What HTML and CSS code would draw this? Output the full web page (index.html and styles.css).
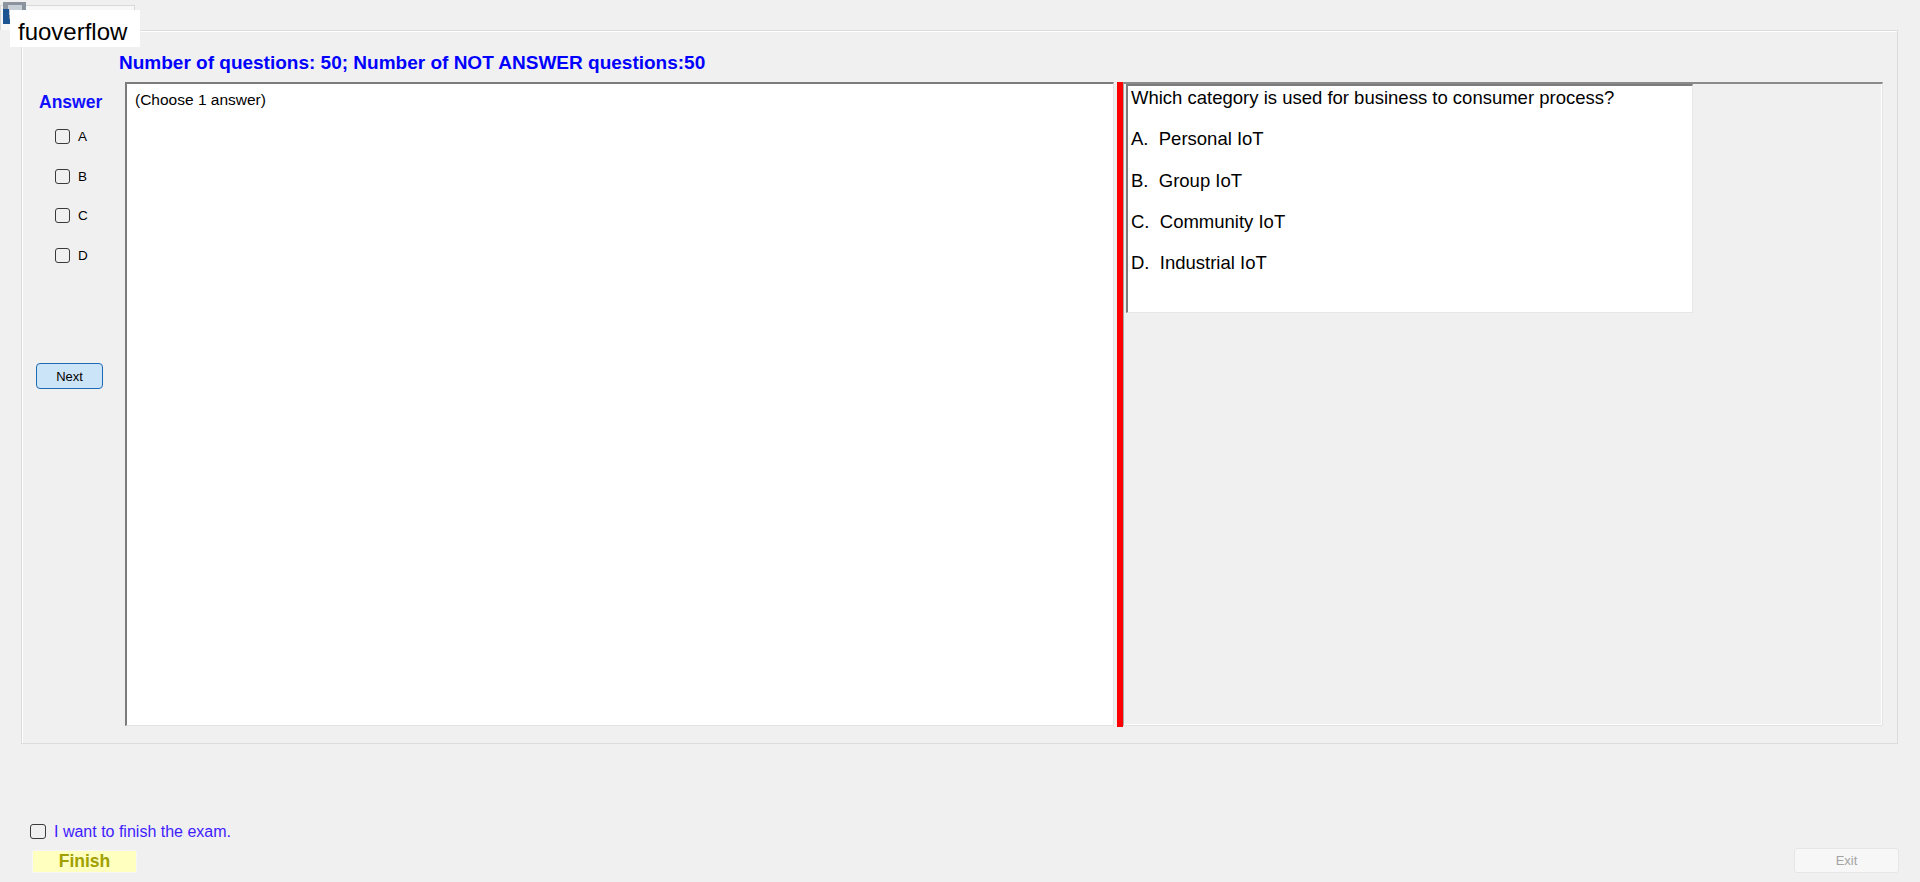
FILE: index.html
```html
<!DOCTYPE html>
<html lang="en">
<head>
    <meta charset="UTF-8">
    <title>Exam</title>
    <link rel="stylesheet" href="styles.css">
</head>
<body>

<div class="topbar">
    <svg class="app-icon" width="28" height="26" viewBox="0 0 28 26">
        <rect x="3" y="2" width="23" height="20" fill="#8b949e"/>
        <rect x="8" y="5" width="14" height="10" fill="#c9cfd6"/>
        <path d="M3 9 H9 V19 H26 V24 H3 Z" fill="#1d5592"/>
    </svg>
    <div class="tab"></div>
    <div class="brand">fuoverflow</div>
</div>

<div class="frame">
    <div class="summary">Number of questions: 50; Number of NOT ANSWER questions:50</div>
    <div class="work">
        <div class="answer-col">
            <div class="answer-title">Answer</div>
            <div class="opts">
                <label class="opt"><span class="box"></span>A</label>
                <label class="opt"><span class="box"></span>B</label>
                <label class="opt"><span class="box"></span>C</label>
                <label class="opt"><span class="box"></span>D</label>
            </div>
            <button class="next-btn">Next</button>
        </div>
        <div class="answer-pane">(Choose 1 answer)</div>
        <div class="splitter"></div>
        <div class="question-area">
            <div class="question">
                <p>Which category is used for business to consumer process?</p>
                <p>A.  Personal IoT</p>
                <p>B.  Group IoT</p>
                <p>C.  Community IoT</p>
                <p>D.  Industrial IoT</p>
            </div>
        </div>
    </div>
</div>

<div class="footer">
    <div class="finish-group">
        <label class="finish-check"><span class="box"></span>I want to finish the exam.</label>
        <button class="finish-btn">Finish</button>
    </div>
    <button class="exit-btn">Exit</button>
</div>

</body>
</html>
```

FILE: styles.css
```css
body {
    margin: 0;
    background: #f0f0f0;
    font-family: "Liberation Sans", Arial, sans-serif;
    color: #000;
    height: 882px;
    overflow: hidden;
}
.topbar {
    position: relative;
    height: 30px;
    box-sizing: border-box;
    padding-top: 5px;
}
.app-icon {
    position: absolute;
    left: 0;
    top: 0;
}
.tab {
    width: 135px;
    height: 25px;
    box-sizing: border-box;
    border: 1px solid #d9d9d9;
    border-bottom: none;
    background: #f7f7f7;
}
.brand {
    position: absolute;
    left: 10px;
    top: 10px;
    width: 130px;
    height: 37px;
    box-sizing: border-box;
    padding: 3px 0 0 8px;
    background: #fff;
    font-size: 24px;
    line-height: 37px;
}
.frame {
    margin-left: 21px;
    width: 1877px;
    height: 714px;
    box-sizing: border-box;
    border: 1px solid #dcdcdc;
    box-shadow: inset 1px 1px #fff;
}
.summary {
    padding: 21px 0 0 97px;
    font-size: 19px;
    line-height: 22px;
    font-weight: bold;
    color: #0000ff;
}
.work {
    display: flex;
    margin-top: 8px;
    height: 645px;
}
.answer-col {
    width: 103px;
    padding-top: 10px;
    box-sizing: border-box;
}
.answer-title {
    padding-left: 17px;
    font-size: 17.5px;
    line-height: 20px;
    font-weight: bold;
    color: #1010ff;
}
.opts {
    display: flex;
    flex-direction: column;
    gap: 19.5px;
    margin-top: 14.5px;
}
.opt {
    display: flex;
    align-items: center;
    height: 20px;
    padding-left: 33px;
    font-size: 13.5px;
}
.box {
    width: 15px;
    height: 15px;
    box-sizing: border-box;
    border: 1px solid #3a3a3a;
    border-radius: 3px;
    margin-right: 8px;
}
.next-btn {
    display: block;
    margin: 98px 0 0 14px;
    width: 67px;
    height: 26px;
    padding: 0;
    background: #cce4f7;
    border: 1px solid #1e6bb5;
    border-radius: 4px;
    font-family: inherit;
    font-size: 13px;
    color: #000;
}
.answer-pane {
    width: 989px;
    height: 644px;
    box-sizing: border-box;
    padding: 7px 0 0 8px;
    background: #fff;
    border-top: 2px solid #7c7c7c;
    border-left: 2px solid #7c7c7c;
    border-right: 1px solid #e3e3e3;
    border-bottom: 1px solid #e3e3e3;
    font-size: 15.5px;
    line-height: 18px;
}
.splitter {
    width: 6px;
    height: 645px;
    margin-left: 3px;
    background: #ff0000;
}
.question-area {
    flex: 1;
    margin-right: 14px;
    height: 644px;
    box-sizing: border-box;
    border-top: 2px solid #8a8a8a;
    border-left: 1px solid #a8a8a8;
    border-right: 1px solid #e3e3e3;
    border-bottom: 1px solid #e3e3e3;
    box-shadow: inset -1px -1px #fff;
}
.question {
    margin-left: 2px;
    width: 567px;
    height: 229px;
    box-sizing: border-box;
    padding: 1px 0 0 3px;
    background: #fff;
    border-top: 2px solid #7c7c7c;
    border-left: 2px solid #7c7c7c;
    border-right: 1px solid #e6e6e6;
    border-bottom: 1px solid #e6e6e6;
    display: flex;
    flex-direction: column;
    gap: 20.25px;
    font-size: 18.5px;
}
.question p {
    margin: 0;
    line-height: 21px;
    white-space: pre;
}
.footer {
    display: flex;
    justify-content: space-between;
    align-items: flex-end;
    margin-top: 79.5px;
    padding: 0 21px 0 30px;
}
.finish-check {
    display: flex;
    align-items: center;
    height: 16px;
    font-size: 16px;
    color: #3f1cff;
}
.finish-check .box {
    width: 16px;
    height: 15px;
    margin-right: 8px;
}
.finish-btn {
    display: block;
    margin: 10.5px 0 0 2px;
    width: 105px;
    height: 23px;
    padding: 0;
    background: #ffffc0;
    border: 1px solid #f6f6f6;
    border-radius: 2px;
    font-family: inherit;
    font-size: 17.5px;
    font-weight: bold;
    color: #a0a000;
}
.exit-btn {
    width: 105px;
    height: 25px;
    padding: 0;
    background: #f7f7f7;
    border: 1px solid #e6e6e6;
    border-radius: 3px;
    font-family: inherit;
    font-size: 13px;
    color: #a3a3a3;
}
```
